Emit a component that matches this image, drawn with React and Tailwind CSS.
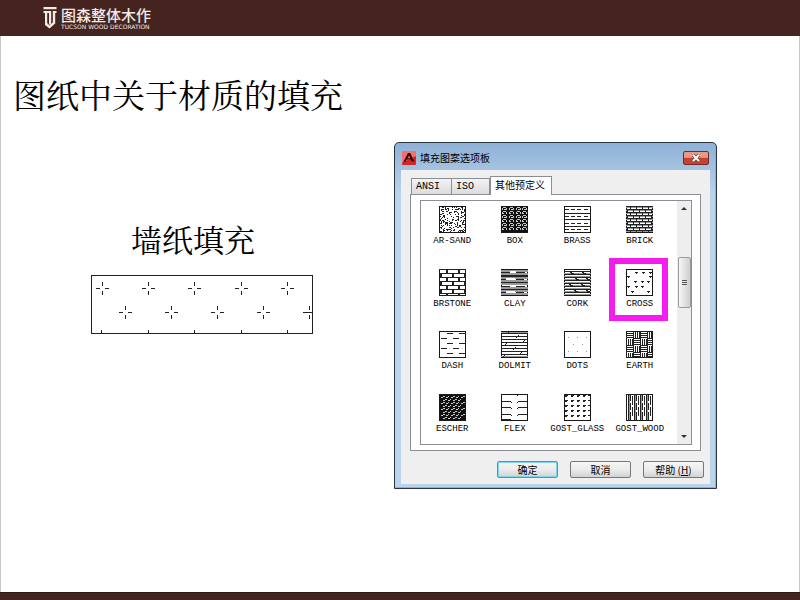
import { useState } from "react";

const steps = (from, to, by) => {
  const out = [];
  for (let v = from; v <= to; v += by) out.push(v);
  return out;
};

const h = (x1, y, x2) => `M${x1} ${y + 0.5}H${x2}`;
const v = (x, y1, y2) => `M${x + 0.5} ${y1}V${y2}`;

const sand = () => {
  let seed = 17;
  const out = [];
  for (let i = 0; i < 215; i++) {
    seed = (seed * 1103 + 12345) % 65536;
    const x = 1 + (seed % 25);
    seed = (seed * 1103 + 12345) % 65536;
    const y = 1 + ((seed >> 3) % 25);
    out.push(h(x, y, x + 1));
  }
  return out.join("");
};

const bricks = (pitch, width, thick) =>
  steps(0, 26, pitch)
    .map((y, r) => {
      const joints = steps(r % 2 ? 1 : 1 + width / 2, 25, width)
        .map((x) => steps(0, thick - 1, 1).map((t) => v(Math.floor(x) + t, y, Math.min(y + pitch, 27))).join(""))
        .join("");
      return h(0, y, 27) + joints;
    })
    .join("");

const rings = () =>
  [1, 8, 15, 21]
    .flatMap((x) =>
      steps(1, 22, 4).map((y, r) => h(x + 1, y, x + 4) + v(x, y + 1, y + 3) + v(x + 4, y + 1, y + 3) + h(x + (r % 2 ? 1 : 2), y + 2, x + (r % 2 ? 2 : 4)))
    )
    .join("");

const earth = () => {
  let d = "";
  for (let r = 0; r < 4; r++)
    for (let c = 0; c < 4; c++) {
      const x = c * 7;
      const y = r * 7;
      const mx = Math.min(x + 7, 27);
      const my = Math.min(y + 7, 27);
      for (let k = 0; k < 7; k += 2) {
        if ((r + c) % 2) {
          if (x + k < 27) d += v(x + k, y + 1, my);
        } else if (y + k < 27) d += h(x, y + k, mx);
      }
      d += v(x, y, my);
    }
  return d;
};

const PATTERNS = [
  { name: "AR-SAND", d: sand() },
  { name: "BOX", dark: true, d: rings() },
  {
    name: "BRASS",
    d: [7, 13, 20].map((y) => h(0, y, 27)).join("") + [3, 10, 17, 23].map((y) => [1, 7, 13, 20].map((x) => h(x, y, x + 4)).join("")).join(""),
  },
  { name: "BRICK", d: bricks(3, 6, 1), soft: steps(1, 25, 3).map((y) => h(0, y, 27)).join("") },
  { name: "BRSTONE", d: bricks(4, 12, 2) },
  {
    name: "CLAY",
    soft: [1, 2, 4, 5, 8, 9, 11, 12, 14, 15, 18, 19, 21, 22, 24, 25].map((y) => h(0, y, 27)).join(""),
    light: [3, 10, 17, 23].map((y, i) => h(i % 2 ? 5 : 9, y, i % 2 ? 14 : 15) + h(i % 2 ? 5 : 9, y - 1, i % 2 ? 14 : 15) + h(i % 2 ? 23 : 24, y, 26)).join(""),
    d:
      [6, 7, 13, 20].map((y) => h(0, y, 27)).join("") +
      [3, 10, 17, 23].map((y, i) => h(1, y, i % 2 ? 5 : 9) + h(15, y, i % 2 ? 23 : 24)).join(""),
  },
  {
    name: "CORK",
    soft: steps(4, 25, 3).map((y) => h(0, y, 27)).join(""),
    d:
      steps(2, 25, 3).map((y) => h(0, y, 27)).join("") +
      [[4, 2], [16, 2], [9, 8], [20, 8], [3, 14], [15, 14], [8, 20], [20, 20]].map(([x, y]) => `M${x} ${y}l5 3M${x + 1} ${y}l5 3`).join(""),
  },
  {
    name: "CROSS",
    d: [[1, 7], [9, 3], [16, 3], [23, 3], [8, 12], [15, 12], [1, 17], [9, 17], [15, 17], [5, 22], [21, 22], [21, 12], [23, 7]]
      .map(([x, y]) => h(x, y, Math.min(x + 3, 26)) + h(x + 1, y + 1, x + 2))
      .join(""),
  },
  {
    name: "DASH",
    d: [[8, 2], [20, 2], [2, 7], [14, 7], [8, 12], [20, 12], [2, 17], [14, 17], [8, 22], [20, 22]].map(([x, y]) => h(x, y, x + 6)).join(""),
  },
  {
    name: "DOLMIT",
    soft: h(0, 1, 27) + h(0, 25, 27),
    d:
      steps(2, 25, 3).map((y) => h(0, y, 27)).join("") +
      [[7, 2], [15, 7], [22, 11], [4, 14], [12, 19], [18, 24], [2, 26]].map(([x, y]) => `M${x} ${y}l3-3`).join(""),
  },
  {
    name: "DOTS",
    soft: [[4, 6], [13, 6], [22, 6], [9, 13], [18, 13], [4, 20], [13, 20], [22, 20]].map(([x, y]) => h(x, y, x + 1)).join(""),
    d: "",
  },
  { name: "EARTH", d: earth() },
  {
    name: "ESCHER",
    dark: true,
    d: steps(3, 24, 3)
      .map((y, r) => steps(2 + (r % 2) * 2, 23, 5).map((x, i) => h(x, y, x + 2) + h(x + 2, y - 1, x + (i % 2 ? 3 : 4))).join(""))
      .join(""),
  },
  {
    name: "FLEX",
    d: [7, 13, 20].map((y) => h(1, y, 10) + h(17, y, 26) + h(10, y + 1, 11) + h(16, y + 1, 17)).join("") + h(1, 25, 10) + h(16, 1, 17),
  },
  {
    name: "GOST_GLASS",
    d: [1, 6, 11, 16, 21]
      .map((y) => [1, 7, 13, 19].map((x) => h(x, y, x + 3) + h(x, y + 1, x + 2)).join("") + h(24, y, 26))
      .join(""),
  },
  {
    name: "GOST_WOOD",
    soft: [3, 9, 15, 21].map((x) => v(x, 1, 26)).join(""),
    d: steps(2, 24, 2).map((x, i) => (i % 3 === 1 ? v(x, 0, 7) + v(x, 9, 16) + v(x, 18, 27) : i % 3 === 2 ? v(x, 2, 11) + v(x, 13, 22) : v(x, 0, 27))).join(""),
  },
];

function Swatch({ pattern }) {
  return (
    <svg viewBox="0 0 27 27" className="block size-[27px]" shapeRendering="crispEdges" fill="none" aria-hidden="true">
      <rect x="0.5" y="0.5" width="26" height="26" fill={pattern.dark ? "#111" : "#fff"} stroke="#181818" />
      {pattern.soft && <path d={pattern.soft} stroke="#999" />}
      {pattern.light && <path d={pattern.light} stroke="#fff" />}
      <path d={pattern.d} stroke={pattern.dark ? "#c8c8c8" : "#222"} />
    </svg>
  );
}

function WallpaperSample() {
  const rows = [
    [13, [11, 57, 103, 150, 196]],
    [37, [34, 80, 126, 172, 218]],
  ];
  return (
    <svg viewBox="0 0 222 59" className="block h-[59px] w-[222px]" shapeRendering="crispEdges" fill="none" stroke="#222" role="img" aria-label="墙纸填充">
      <rect x="0.5" y="0.5" width="221" height="58" />
      {rows.map(([y, xs]) =>
        xs.map((x) => (
          <path key={`${x}-${y}`} d={h(x - 6, y, x - 2) + h(x + 3, y, Math.min(x + 7, 221)) + v(x, y - 6, y - 2) + v(x, y + 3, y + 7)} />
        ))
      )}
      <path d={h(213, 37, 221) + [10, 57, 103, 150, 196].map((x) => v(x, 55, 58)).join("")} />
    </svg>
  );
}

function Brand() {
  return (
    <div className="flex items-start gap-1 pl-[43px] pt-[7px] text-[#f3eae6]">
      <svg viewBox="0 0 14 22" className="h-[22px] w-[14px]" fill="currentColor" aria-hidden="true">
        <path d="M0.500 0H13.500V2.300H0.500ZM0.500 4H8.200V17.500H6V6H4.200V16L6.500 18.500L9.800 15.500V4H13.500V6H12.200V16.500L6.500 21.500L2 18V6H0.500Z" />
      </svg>
      <div>
        <div className="text-[15px] leading-[15px] font-medium">图森整体木作</div>
        <div className="pt-px font-[DejaVu_Sans,sans-serif] text-[6px] leading-[8px] whitespace-nowrap">TUCSON WOOD DECORATION</div>
      </div>
    </div>
  );
}

const TABS = ["ANSI", "ISO", "其他预定义"];
const MONO = "font-['Liberation_Mono','Noto_Sans_CJK_SC',monospace]";

function PatternDialog() {
  const [tab, setTab] = useState("其他预定义");
  const [selected, setSelected] = useState("CROSS");
  const button = "h-[17px] w-[61px] rounded-[2px] border bg-linear-to-b from-[#f6f6f6] via-[#ececec] to-[#d2d2d2] text-[10px] leading-[14px]";
  return (
    <section aria-label="填充图案选项板" className="w-[323px] shrink-0 rounded-t-[5px] border border-[#273642] bg-linear-to-b from-[#8eb1d6] via-[#bcd3ec] via-15% to-[#bcd3ec] px-[6px] pb-1 text-black shadow-[inset_-1px_-1px_0_#53cbe5]">
      <header className="flex h-[27px] items-center justify-between pl-px pt-[2px]">
        <div className="flex items-center gap-1">
          <svg viewBox="0 0 14 14" className="size-[14px]" aria-hidden="true">
            <rect width="14" height="14" rx="1" fill="#d3242a" />
            <path d="M0 0H14V5L0 12Z" fill="#f4716b" />
            <path d="M6 2H8.300L12.500 11L9.500 10L8.600 8.500H5L3.500 10.500L1 11.500ZM7 4.500L5.700 7.200H8.200Z" fill="#3c080b" fillRule="evenodd" />
          </svg>
          <h2 className="text-[10px] leading-[14px]">填充图案选项板</h2>
        </div>
        <button type="button" aria-label="关闭" className="mr-px flex h-[14px] w-[26px] items-center justify-center rounded-[2px] border border-[#702c2a] bg-linear-to-b from-[#e69a89] from-45% to-[#c34230] to-50%">
          <svg viewBox="0 0 10 8" className="h-2 w-[10px]" aria-hidden="true">
            <path d="M2 1L8 7M8 1L2 7" stroke="#68403f" strokeWidth="3.500" />
            <path d="M2 1L8 7M8 1L2 7" stroke="#fff" strokeWidth="2" />
          </svg>
        </button>
      </header>

      <div className="bg-[#efefef] px-[9px] pb-[6px] pt-[6px]">
        <div role="tablist" className="flex h-[18px] items-end pl-px">
          {TABS.map((name, i) => (
            <button
              key={name}
              type="button"
              role="tab"
              aria-selected={tab === name}
              onClick={() => setTab(name)}
              className={`${MONO} border border-b-0 border-[#8b8e93] text-left text-[10px] ${
                tab === name ? "relative -mb-px h-[19px] bg-white px-1 leading-[17px]" : "h-4 bg-linear-to-b from-[#f4f4f4] to-[#dcdcdc] pl-1 leading-[16px]"
              } ${i === 0 ? "w-[41px]" : i === 1 ? "w-[38px] border-l-0" : "w-[62px] whitespace-nowrap"}`}
            >
              {name}
            </button>
          ))}
        </div>
        <div role="tabpanel" className="border border-[#8b8e93] bg-white pb-[5px] pl-[9px] pr-2 pt-[5px]">
          <div className="flex h-[245px] overflow-hidden border border-[#8b8e93]">
            <div className="grid h-[255px] flex-1 grid-cols-4 grid-rows-4 pr-[6px] pt-[5px]">
              {PATTERNS.map((p) => (
                <button key={p.name} type="button" onClick={() => setSelected(p.name)} className="relative flex flex-col items-center gap-[3px]">
                  <Swatch pattern={p} />
                  <span className={`${MONO} text-[9px] leading-[10px]`}>{p.name}</span>
                  {selected === p.name && <span className="absolute -top-[11px] left-0 h-[63px] w-[59px] border-[6px] border-[#f51cf0]" />}
                </button>
              ))}
            </div>
            <div className="flex w-[14px] flex-col items-center bg-[#eeeeee]">
              <button type="button" aria-label="向上滚动" className="flex h-[15px] w-full items-center justify-center">
                <svg viewBox="0 0 6 3" className="h-[3px] w-[6px]" aria-hidden="true"><path d="M0 3L3 0L6 3Z" fill="#333" /></svg>
              </button>
              <div className="h-[41px]" />
              <div className="flex h-[51px] w-[13px] flex-col items-center justify-center gap-px rounded-[2px] border border-[#9a9a9a] bg-linear-to-r from-[#f6f6f6] to-[#cfcfcf]">
                {[0, 1, 2].map((n) => (
                  <span key={n} className="h-px w-[5px] bg-[#555]" />
                ))}
              </div>
              <div className="flex-1" />
              <button type="button" aria-label="向下滚动" className="flex h-[15px] w-full items-center justify-center">
                <svg viewBox="0 0 6 3" className="h-[3px] w-[6px]" aria-hidden="true"><path d="M0 0L3 3L6 0Z" fill="#333" /></svg>
              </button>
            </div>
          </div>
        </div>
        <footer className="-mr-[3px] flex justify-end gap-3 pt-[10px]">
          <button type="button" className={`${button} border-[#3c9fc0] shadow-[inset_0_0_0_1px_#7fd3ea]`}>确定</button>
          <button type="button" className={`${button} border-[#777]`}>取消</button>
          <button type="button" className={`${button} border-[#777]`}>帮助 (<u>H</u>)</button>
        </footer>
      </div>
    </section>
  );
}

export default function App() {
  return (
    <div className="flex min-h-screen flex-col bg-white font-['Noto_Sans_CJK_SC',sans-serif] text-black">
      <header className="h-9 bg-[#452420]">
        <Brand />
      </header>
      <main className="flex-1 border-x border-[#c9c9c9]">
        <h1 className="pl-3 pt-[38px] font-['Noto_Serif_CJK_SC','Noto_Sans_CJK_SC',serif] text-[33px] leading-[40px]">图纸中关于材质的填充</h1>
        <div className="flex items-start pr-[82px] pt-7">
          <figure className="flex flex-1 flex-col pl-[90px] pt-[76px]">
            <figcaption className="pb-4 pl-10 font-['Noto_Serif_CJK_SC','Noto_Sans_CJK_SC',serif] text-[31px] leading-[41px]">墙纸填充</figcaption>
            <WallpaperSample />
          </figure>
          <PatternDialog />
        </div>
      </main>
      <footer className="h-2 border-t border-[#2e1815] bg-[#452420]" />
    </div>
  );
}
